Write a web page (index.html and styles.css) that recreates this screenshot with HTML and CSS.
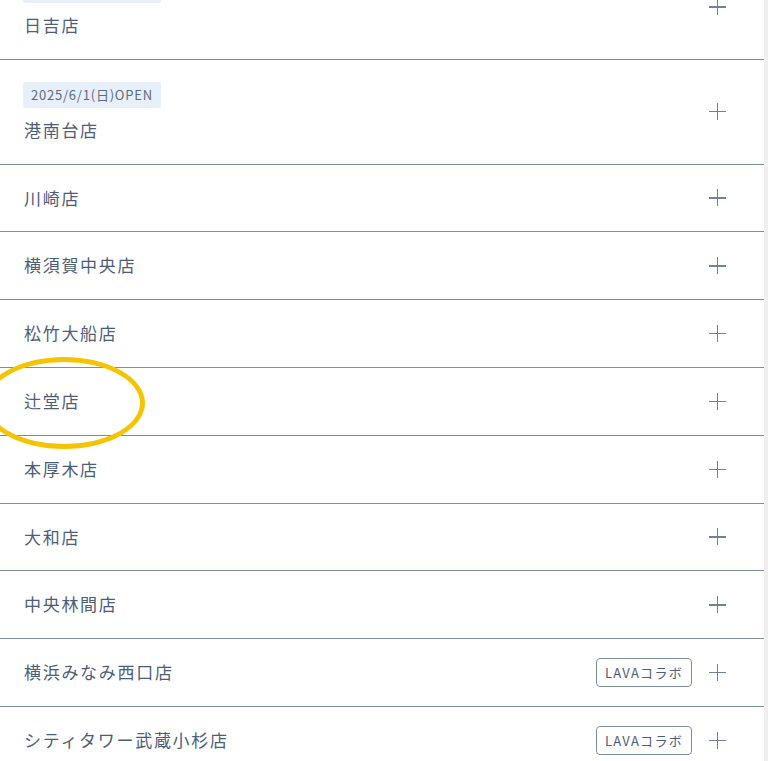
FILE: index.html
```html
<!DOCTYPE html>
<html lang="ja">
<head>
<meta charset="utf-8">
<link rel="stylesheet" href="styles.css">
<title>店舗一覧</title>
</head>
<body>
<div class="page">
  <ul class="shop-list">
    <li class="shop">
      <div class="shop-info">
        <span class="open-badge">2025/6/1(日)OPEN</span>
        <span class="shop-name">日吉店</span>
      </div>
      <span class="plus"></span>
    </li>
    <li class="shop">
      <div class="shop-info">
        <span class="open-badge">2025/6/1(日)OPEN</span>
        <span class="shop-name">港南台店</span>
      </div>
      <span class="plus"></span>
    </li>
    <li class="shop"><div class="shop-info"><span class="shop-name">川崎店</span></div><span class="plus"></span></li>
    <li class="shop"><div class="shop-info"><span class="shop-name">横須賀中央店</span></div><span class="plus"></span></li>
    <li class="shop"><div class="shop-info"><span class="shop-name">松竹大船店</span></div><span class="plus"></span></li>
    <li class="shop marked"><div class="shop-info"><span class="shop-name">辻堂店</span></div><span class="plus"></span><span class="circle"></span></li>
    <li class="shop"><div class="shop-info"><span class="shop-name">本厚木店</span></div><span class="plus"></span></li>
    <li class="shop"><div class="shop-info"><span class="shop-name">大和店</span></div><span class="plus"></span></li>
    <li class="shop"><div class="shop-info"><span class="shop-name">中央林間店</span></div><span class="plus"></span></li>
    <li class="shop"><div class="shop-info"><span class="shop-name">横浜みなみ西口店</span></div><span class="collab">LAVAコラボ</span><span class="plus"></span></li>
    <li class="shop"><div class="shop-info"><span class="shop-name">シティタワー武蔵小杉店</span></div><span class="collab">LAVAコラボ</span><span class="plus"></span></li>
  </ul>
</div>
</body>
</html>
```
FILE: styles.css
```css
html, body {
  margin: 0;
  padding: 0;
  background: #efefef;
  overflow: hidden;
  height: 761px;
}
body {
  font-family: "Noto Sans CJK JP", "Noto Sans", sans-serif;
  color: #4b5d78;
}
.page {
  width: 764px;
  background: #fff;
  min-height: 761px;
}
.shop-list {
  list-style: none;
  margin: -45px 0 0 0;
  padding: 0;
}
.shop {
  position: relative;
  display: flex;
  align-items: center;
  padding: 22px 38px 22px 24px;
  border-bottom: 1px solid #7d8ea4;
}
.shop-info {
  flex: 1;
  display: flex;
  flex-direction: column;
  align-items: flex-start;
  gap: 11px;
}
.shop-name {
  font-size: 17px;
  line-height: 22.8px;
  letter-spacing: 0.1em;
}
.open-badge {
  display: inline-block;
  background: #e7eff9;
  color: #5b6c82;
  font-size: 13px;
  line-height: 26px;
  height: 26px;
  padding: 0 8px;
  border-radius: 2px;
  letter-spacing: 0.06em;
  margin-left: -1px;
}
.collab {
  font-size: 13px;
  line-height: 27px;
  padding: 0 8px;
  border: 1px solid #7d8ea4;
  border-radius: 4px;
  color: #4b5d78;
  letter-spacing: 0.1em;
  margin: -4px 17px -4px 0;
}
.plus {
  position: relative;
  width: 17px;
  height: 17px;
  flex: none;
}
.plus::before,
.plus::after {
  content: "";
  position: absolute;
  background: #6e80a0;
}
.plus::before {
  left: 0;
  right: 0;
  top: 8px;
  height: 1.3px;
}
.plus::after {
  top: 0;
  bottom: 0;
  left: 8px;
  width: 1.3px;
}
.circle {
  position: absolute;
  left: -17px;
  top: -11px;
  width: 162px;
  height: 92px;
  border: 5px solid #f5c400;
  border-radius: 50%;
  box-sizing: border-box;
  pointer-events: none;
}
```
